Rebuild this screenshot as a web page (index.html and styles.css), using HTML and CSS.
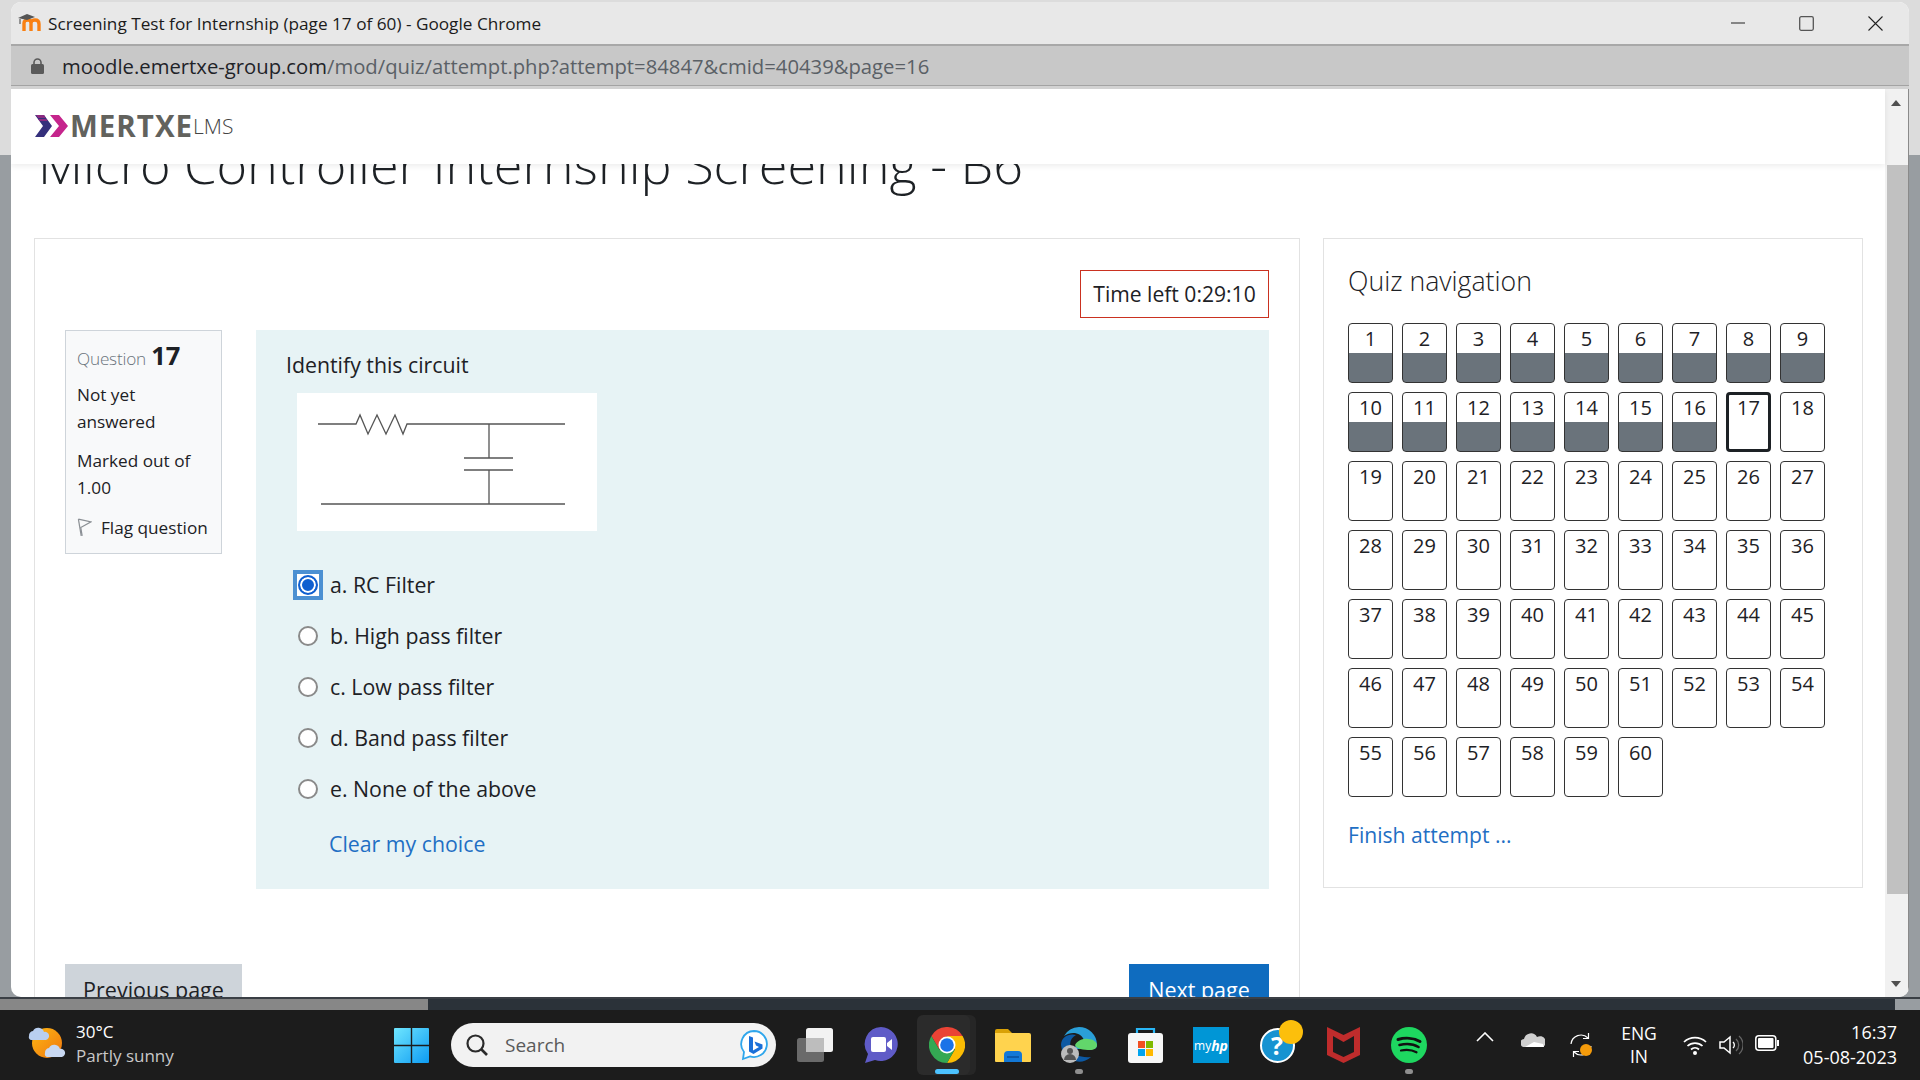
FILE: index.html
```html
<!DOCTYPE html>
<html lang="en">
<head>
  <meta charset="UTF-8" />
  <title>Screening Test for Internship (page 17 of 60) - Google Chrome</title>
  <link rel="stylesheet" href="styles.css">
</head>
<body>

  <div class="desktop">
    <div class="window">

      <div class="titlebar">
        <svg class="favicon" viewBox="0 0 24 18" width="24" height="18">
          <path d="M6 17V9c0-2 2-3 4-3s3 1 3 3v8M13 9c0-2 2-3 4-3s4 1 4 4v7" fill="none" stroke="#f98012" stroke-width="3.4"/>
          <path d="M0 4 9 0l8 3-8 3z" fill="#555"/>
          <path d="M2 5v5" stroke="#777" stroke-width="1.5"/>
        </svg>
        <span class="title-text">Screening Test for Internship (page 17 of 60) - Google Chrome</span>
        <div class="win-controls">
          <span class="win-btn"><svg width="14" height="14" viewBox="0 0 14 14"><path d="M0 7h14" stroke="#222" stroke-width="1.2"/></svg></span>
          <span class="win-btn"><svg width="15" height="15" viewBox="0 0 15 15"><rect x=".7" y=".7" width="13.6" height="13.6" rx="1.5" fill="none" stroke="#555" stroke-width="1.3"/></svg></span>
          <span class="win-btn"><svg width="15" height="15" viewBox="0 0 15 15"><path d="M.5.5l14 14M14.5.5l-14 14" stroke="#222" stroke-width="1.1"/></svg></span>
        </div>
      </div>

      <div class="addressbar">
        <svg class="lock" viewBox="0 0 13 16" width="13" height="16">
          <path d="M3 7V4.500a3.500 3.500 0 0 1 7 0V7" fill="none" stroke="#5a5a5a" stroke-width="1.6"/>
          <rect y="6" width="13" height="10" rx="1.5" fill="#5a5a5a"/>
        </svg>
        <span class="url"><b>moodle.emertxe-group.com</b>/mod/quiz/attempt.php?attempt=84847&amp;cmid=40439&amp;page=16</span>
      </div>

      <div class="viewport">
        <header class="site-header">
          <svg class="logo-mark" viewBox="0 0 33 22" width="33" height="22">
            <path d="M0 0h9l8 11-8 11H0l8-11z" fill="#35307c"/>
            <path d="M1 0h8l2 3H3zM3 4h8.500l1 2H4.500z" fill="#8a2a80"/>
            <path d="M15 0h9l9 11-9 11h-9l9-11z" fill="#c5258c"/>
          </svg>
          <span class="logo-name">MERTXE</span><span class="logo-lms">LMS</span>
        </header>

        <div class="page">
          <h1 class="page-title">Micro Controller Internship Screening - B6</h1>

          <div class="columns">
            <section class="quiz-card">
              <div class="timer-row"><div class="timer">Time left 0:29:10</div></div>

              <div class="question">
                <aside class="q-info">
                  <div class="q-no">Question <strong>17</strong></div>
                  <div class="q-state">Not yet answered</div>
                  <div class="q-grade">Marked out of 1.00</div>
                  <div class="q-flag">
                    <svg viewBox="0 0 16 20" width="15" height="19"><path d="M1.500 1 15 4 4 10l1.500 9" fill="none" stroke="#8a8f94" stroke-width="1.3"/><path d="M1.500 1l3 18" fill="none" stroke="#8a8f94" stroke-width="1.3"/></svg>
                    <span>Flag question</span>
                  </div>
                </aside>

                <div class="q-body">
                  <p class="q-text">Identify this circuit</p>
                  <svg class="circuit" viewBox="0 0 300 138" width="300" height="138">
                    <g fill="none" stroke="#555" stroke-width="1.3">
                      <path d="M21 31H59l4-9 8 19 9-19 9 19 9-19 8 19 4-10H268"/>
                      <path d="M192 31V65M167 65h49M167 77h49M192 77v34M24 111H268"/>
                    </g>
                  </svg>
                  <ul class="answers">
                    <li><span class="radio-wrap selected"><span class="radio checked"></span></span>a. RC Filter</li>
                    <li><span class="radio-wrap"><span class="radio"></span></span>b. High pass filter</li>
                    <li><span class="radio-wrap"><span class="radio"></span></span>c. Low pass filter</li>
                    <li><span class="radio-wrap"><span class="radio"></span></span>d. Band pass filter</li>
                    <li><span class="radio-wrap"><span class="radio"></span></span>e. None of the above</li>
                  </ul>
                  <a class="clear-choice" href="#">Clear my choice</a>
                </div>
              </div>

              <div class="page-buttons">
                <button class="btn-prev">Previous page</button>
                <button class="btn-next">Next page</button>
              </div>
            </section>

            <aside class="nav-card">
              <h2>Quiz navigation</h2>
              <div class="nav-grid">
                <a class="qn done">1</a><a class="qn done">2</a><a class="qn done">3</a><a class="qn done">4</a><a class="qn done">5</a><a class="qn done">6</a><a class="qn done">7</a><a class="qn done">8</a><a class="qn done">9</a>
                <a class="qn done">10</a><a class="qn done">11</a><a class="qn done">12</a><a class="qn done">13</a><a class="qn done">14</a><a class="qn done">15</a><a class="qn done">16</a><a class="qn current">17</a><a class="qn">18</a>
                <a class="qn">19</a><a class="qn">20</a><a class="qn">21</a><a class="qn">22</a><a class="qn">23</a><a class="qn">24</a><a class="qn">25</a><a class="qn">26</a><a class="qn">27</a>
                <a class="qn">28</a><a class="qn">29</a><a class="qn">30</a><a class="qn">31</a><a class="qn">32</a><a class="qn">33</a><a class="qn">34</a><a class="qn">35</a><a class="qn">36</a>
                <a class="qn">37</a><a class="qn">38</a><a class="qn">39</a><a class="qn">40</a><a class="qn">41</a><a class="qn">42</a><a class="qn">43</a><a class="qn">44</a><a class="qn">45</a>
                <a class="qn">46</a><a class="qn">47</a><a class="qn">48</a><a class="qn">49</a><a class="qn">50</a><a class="qn">51</a><a class="qn">52</a><a class="qn">53</a><a class="qn">54</a>
                <a class="qn">55</a><a class="qn">56</a><a class="qn">57</a><a class="qn">58</a><a class="qn">59</a><a class="qn">60</a>
              </div>
              <a class="finish" href="#">Finish attempt ...</a>
            </aside>
          </div>
        </div>

        <div class="scrollbar">
          <span class="arrow-up"></span>
          <span class="thumb"></span>
          <span class="arrow-down"></span>
        </div>
      </div>
    </div>
    <div class="back-strip"></div>
  </div>

  <footer class="taskbar">
    <div class="weather">
      <svg class="weather-icon" viewBox="0 0 38 34" width="38" height="34">
        <defs><linearGradient id="sun" x1="0" y1="0" x2="1" y2="1"><stop offset="0" stop-color="#fdb813"/><stop offset="1" stop-color="#f0760f"/></linearGradient></defs>
        <circle cx="19" cy="15" r="15" fill="url(#sun)"/>
        <path d="M4 11a5 5 0 0 1 4-5 6 6 0 0 1 11 1 4 4 0 0 1 2 8H6a3 3 0 0 1-2-4z" transform="translate(-3 -3)" fill="#b9cff0"/>
        <path d="M17 27a5 5 0 0 1 4-5 6 6 0 0 1 11 1 4 4 0 0 1 2 8H19a3 3 0 0 1-2-4z" transform="translate(0 -2)" fill="#c8d8f2"/>
      </svg>
      <div class="weather-text"><span>30°C</span><span class="dim">Partly sunny</span></div>
    </div>

    <svg class="start" viewBox="0 0 35 35" width="35" height="35">
      <defs><linearGradient id="winblue" x1="0" y1="0" x2="1" y2="1"><stop offset="0" stop-color="#6fe6ff"/><stop offset="1" stop-color="#0d9bf2"/></linearGradient></defs>
      <path d="M0 1a1 1 0 0 1 1-1h15.800v16.800H0zM18.200 0H34a1 1 0 0 1 1 1v15.800H18.200zM0 18.200h16.800V35H1a1 1 0 0 1-1-1zM18.200 18.200H35V34a1 1 0 0 1-1 1H18.200z" fill="url(#winblue)"/>
    </svg>

    <div class="searchbox">
      <svg viewBox="0 0 24 24" width="24" height="24"><circle cx="10.500" cy="10.500" r="8" fill="none" stroke="#2b2b2b" stroke-width="2.2"/><path d="M16.500 16.500 22 22" stroke="#2b2b2b" stroke-width="2.6"/></svg>
      <span>Search</span>
      <svg class="bing" viewBox="0 0 32 32" width="32" height="32">
        <path d="M16 2a13 13 0 1 1-4 25.400L5 30l1-7A13 13 0 0 1 16 2z" fill="#fff" stroke="#2fa6ec" stroke-width="1.8"/>
        <path d="M11 7l4 1.500v13l6-3.500-3-1.500-1.500-4 8 3v4l-9 5.500-4.500-2.500z" fill="#1a6fd8"/>
      </svg>
    </div>

    <div class="apps">
      <span class="app">
        <svg viewBox="0 0 36 34" width="36" height="34"><rect y="10" width="27" height="24" rx="2.5" fill="#6a6a6a"/><rect x="9" width="27" height="24" rx="2.5" fill="#f2f2f2"/><path d="M9 10h18v14H9z" fill="#bdbdbd"/></svg>
      </span>
      <span class="app">
        <svg viewBox="0 0 34 36" width="34" height="36"><path d="M17 0a17 17 0 1 1-6 33L1 36l3-9A17 17 0 0 1 17 0z" fill="#5f5bc7"/><rect x="7" y="10" width="15" height="15" rx="2" fill="#fff"/><path d="M23 16l5-4v11l-5-4z" fill="#fff"/></svg>
      </span>
      <span class="app app-active">
        <svg viewBox="0 0 36 36" width="36" height="36">
          <path d="M2.400 9A18 18 0 0 1 33.600 9H18l-7.800 13.500z" fill="#ea4335"/>
          <path d="M33.600 9A18 18 0 0 1 18 36l7.800-13.500L18 9z" fill="#fbbc04"/>
          <path d="M18 36A18 18 0 0 1 2.400 9l7.800 13.500h15.600z" fill="#34a853"/>
          <circle cx="18" cy="18" r="8.500" fill="#fff"/><circle cx="18" cy="18" r="6.800" fill="#1a73e8"/>
        </svg>
        <i class="pill pill-blue"></i>
      </span>
      <span class="app">
        <svg viewBox="0 0 36 33" width="36" height="33"><path d="M0 2a2 2 0 0 1 2-2h11l4 4H0z" fill="#d9a106"/><path d="M0 4h34a2 2 0 0 1 2 2v26a1 1 0 0 1-1 1H1a1 1 0 0 1-1-1z" fill="#ffd34e"/><path d="M9 33v-7a4 4 0 0 1 4-4h10a4 4 0 0 1 4 4v7z" fill="#1378d6"/><path d="M12 28h12" stroke="#0a4f9a" stroke-width="1.5"/></svg>
      </span>
      <span class="app">
        <svg viewBox="0 0 36 36" width="36" height="36">
          <path d="M18 0a18 18 0 0 1 18 18c0 2-1 4-4 4H14c0-5 4-8 9-9C20 5 10 4 3 9a18 18 0 0 1 15-9z" fill="#2a9fd8"/>
          <path d="M36 18c0 3-3 5-7 5-6 0-14-1-15-5 2-4 8-7 13-6 5 0 9 3 9 6z" fill="#62d66b"/>
          <path d="M0 18C0 10 8 6 15 8c-5 3-7 7-5 13 2 7 10 10 20 9a18 18 0 0 1-30-12z" fill="#0c59a4"/>
          <circle cx="9" cy="27" r="9" fill="#bcbcbc"/><circle cx="9" cy="24" r="3" fill="#555"/><path d="M3 33a6 6 0 0 1 12 0z" fill="#555"/>
        </svg>
        <i class="pill"></i>
      </span>
      <span class="app">
        <svg viewBox="0 0 35 36" width="35" height="36">
          <path d="M9 8V2h17v6" fill="none" stroke="#29b6f6" stroke-width="2.2"/>
          <rect y="6" width="35" height="30" rx="3" fill="#f7f7f7"/>
          <rect x="10" y="14" width="7" height="7" fill="#f25022"/><rect x="18" y="14" width="7" height="7" fill="#7fba00"/><rect x="10" y="22" width="7" height="7" fill="#00a4ef"/><rect x="18" y="22" width="7" height="7" fill="#ffb900"/>
        </svg>
      </span>
      <span class="app"><span class="myhp">my<em>hp</em></span></span>
      <span class="app">
        <span class="help">?</span>
        <i class="badge"></i>
      </span>
      <span class="app">
        <svg viewBox="0 0 33 36" width="33" height="36"><path d="M0 0l16.500 8L33 0v28l-16.500 8L0 28zM6 9v16l10.500 5L27 25V9l-10.500 6z" fill="#bf2c2c" fill-rule="evenodd"/></svg>
      </span>
      <span class="app">
        <svg viewBox="0 0 36 36" width="36" height="36"><circle cx="18" cy="18" r="18" fill="#1ed760"/><g fill="none" stroke="#111" stroke-linecap="round"><path d="M7 12.500c7-2 16-1.500 22 2" stroke-width="3"/><path d="M8.500 18c6-1.500 14-1 19 2" stroke-width="2.6"/><path d="M10 23.500c5-1 11-.7 15.500 1.800" stroke-width="2.2"/></g></svg>
        <i class="pill"></i>
      </span>
    </div>

    <div class="tray">
      <span class="tray-item"><svg viewBox="0 0 18 10" width="18" height="10"><path d="M1 9l8-8 8 8" fill="none" stroke="#fff" stroke-width="1.6"/></svg></span>
      <span class="tray-item"><svg viewBox="0 0 24 15" width="24" height="15"><path d="M4 15a4 4 0 0 1-1-8 7 7 0 0 1 13-2 5 5 0 0 1 6 10z" fill="#cfcfcf"/><path d="M4 15l9-5 9 2 1 3z" fill="#fff"/></svg></span>
      <span class="tray-item"><svg viewBox="0 0 26 26" width="26" height="26"><path d="M3 12a10 10 0 0 1 17-6M23 14a10 10 0 0 1-17 6" fill="none" stroke="#fff" stroke-width="1.2"/><path d="M20.500 1v5.500H15M5.500 25v-5.500H11" fill="none" stroke="#fff" stroke-width="1.2"/><circle cx="18" cy="18" r="6" fill="#f59b0b"/></svg></span>
    </div>

    <div class="lang"><span>ENG</span><span>IN</span></div>

    <div class="status">
      <span class="status-item"><svg viewBox="0 0 24 20" width="24" height="20"><g fill="none" stroke="#fff" stroke-width="1.7"><path d="M1 7a16 16 0 0 1 22 0"/><path d="M4.500 11a11 11 0 0 1 15 0"/><path d="M8 14.500a6 6 0 0 1 8 0"/></g><circle cx="12" cy="18" r="2" fill="#fff"/></svg></span>
      <span class="status-item"><svg viewBox="0 0 24 20" width="24" height="20"><path d="M1 7h4l6-5v16l-6-5H1z" fill="none" stroke="#fff" stroke-width="1.5"/><path d="M14 7a4 4 0 0 1 0 6" fill="none" stroke="#fff" stroke-width="1.3"/><path d="M17 4a8 8 0 0 1 0 12M20 1a12 12 0 0 1 0 18" fill="none" stroke="#666" stroke-width="1.3"/></svg></span>
      <span class="status-item"><svg viewBox="0 0 24 16" width="24" height="16"><rect x=".8" y=".8" width="20" height="14.400" rx="3" fill="none" stroke="#fff" stroke-width="1.5"/><rect x="3" y="3" width="15.500" height="10" rx="1" fill="#fff"/><rect x="22" y="5" width="2" height="6" fill="#fff"/></svg></span>
    </div>

    <div class="clock"><span>16:37</span><span>05-08-2023</span></div>
  </footer>

</body>
</html>
```

FILE: styles.css
```css
* {
  box-sizing: border-box;
}

body {
  margin: 0;
  width: 1920px;
  height: 1080px;
  overflow: hidden;
  font-family: "Open Sans", sans-serif;
  color: #1d2125;
  background: #1c1c1c;
}

.desktop {
  height: 1010px;
  padding-top: 2px;
  background: linear-gradient(#dcdcdc 0, #dcdcdc 155px, #989da1 155px);
}

.window {
  margin: 0 11px;
  height: 995px;
  display: flex;
  flex-direction: column;
  background: #fff;
  border-radius: 10px;
  overflow: hidden;
}

.back-strip {
  height: 13px;
  background: linear-gradient(90deg, #878787 0, #878787 428px, #2b3239 428px, #2b3239 1895px, #989da1 1895px);
  border-top: 2px solid #3a3f45;
}

/* chrome title + address */

.titlebar {
  height: 44px;
  flex-shrink: 0;
  display: flex;
  align-items: center;
  padding-left: 7px;
  background: #e8e8e8;
  border-bottom: 2px solid #a8a8a8;
}

.favicon {
  margin-right: 6px;
}

.title-text {
  font-size: 17.2px;
  color: #1b1b1b;
}

.win-controls {
  margin-left: auto;
  margin-right: -1px;
  display: flex;
}

.win-btn {
  width: 69px;
  display: flex;
  justify-content: center;
  align-items: center;
}

.addressbar {
  height: 43px;
  flex-shrink: 0;
  display: flex;
  align-items: center;
  padding: 0 0 4px 20px;
  background: linear-gradient(#c8c8c8 39px, #a3a3a3 39px, #a3a3a3 40px, #d2d2d2 40px);
}

.url {
  margin-left: 18px;
  font-size: 20.25px;
  color: #5a6066;
}

.url b {
  font-weight: 400;
  color: #1f2328;
}

/* page */

.viewport {
  flex: 1;
  min-height: 0;
  position: relative;
  overflow: hidden;
  display: flex;
}

.site-header {
  position: absolute;
  top: 0;
  left: 0;
  right: 24px;
  height: 75px;
  z-index: 2;
  display: flex;
  align-items: center;
  padding: 0 0 2px 24px;
  background: #fff;
  box-shadow: 0 2px 6px rgba(0, 0, 0, 0.08);
}

.logo-mark {
  margin-right: 2px;
}

.logo-name {
  font-size: 29.5px;
  font-weight: 700;
  letter-spacing: 1px;
  color: #62625d;
  line-height: 1;
}

.logo-lms {
  font-size: 21px;
  font-weight: 300;
  color: #444;
  line-height: 1;
  margin-top: 1px;
}

.page {
  flex: 1;
  min-width: 0;
  padding-left: 23px;
}

.page-title {
  margin: 37px 0 19px 4px;
  height: 93px;
  font-size: 52.2px;
  font-weight: 300;
  line-height: 75px;
  white-space: nowrap;
  color: #1d2125;
}

.columns {
  display: flex;
  gap: 23px;
  align-items: flex-start;
}

.quiz-card {
  width: 1266px;
  flex-shrink: 0;
  padding: 31px 30px 60px;
  border: 1px solid #e2e2e2;
}

.timer-row {
  display: flex;
  justify-content: flex-end;
}

.timer {
  height: 48px;
  width: 189px;
  padding-bottom: 2px;
  display: flex;
  align-items: center;
  justify-content: center;
  font-size: 21.1px;
  border: 1px solid #ca3120;
}

.question {
  display: flex;
  align-items: flex-start;
  gap: 34px;
  margin-top: 12px;
}

.q-info {
  width: 157px;
  height: 224px;
  flex-shrink: 0;
  padding: 11px 11px;
  font-size: 17.2px;
  line-height: 27px;
  background: #f8f9fa;
  border: 1px solid #ced4da;
}

.q-no {
  color: #6a737b;
  font-weight: 300;
  letter-spacing: -0.2px;
}

.q-no strong {
  margin-left: 1px;
  font-size: 25.5px;
  font-weight: 700;
  color: #1d2125;
}

.q-state {
  margin-top: 9px;
}

.q-grade {
  margin-top: 12px;
}

.q-flag {
  display: flex;
  align-items: center;
  gap: 9px;
  margin-top: 13px;
  white-space: nowrap;
}

.q-body {
  flex: 1;
  height: 559px;
  padding: 20px 30px;
  background: #e7f3f5;
}

.q-text {
  margin: 0 0 13px;
  font-size: 21.3px;
  line-height: 30px;
}

.circuit {
  display: block;
  margin-left: 11px;
  background: #fff;
}

.answers {
  list-style: none;
  margin: 29px 0 0;
  padding: 0;
}

.answers li {
  height: 51px;
  display: flex;
  align-items: center;
  gap: 7px;
  margin-left: 7px;
  padding-bottom: 2px;
  font-size: 21.3px;
}

.radio-wrap {
  width: 30px;
  height: 30px;
  display: flex;
  align-items: center;
  justify-content: center;
}

.radio-wrap.selected {
  background: #fff;
  border: 4px solid #4c90d2;
}

.radio {
  width: 20px;
  height: 20px;
  flex-shrink: 0;
  border-radius: 50%;
  background: #fff;
  border: 2px solid #8a8a8a;
}

.radio.checked {
  border-color: #0f5fd0;
  box-shadow: inset 0 0 0 2px #fff;
  background: #0f5fd0;
}

.clear-choice {
  display: block;
  margin: 14px 0 0 43px;
  font-size: 21.3px;
  line-height: 30px;
  color: #1f6fc4;
  text-decoration: none;
}

.page-buttons {
  display: flex;
  justify-content: space-between;
  margin-top: 75px;
}

.page-buttons button {
  height: 50px;
  border: 0;
  font-family: inherit;
  font-size: 21.5px;
}

.btn-prev {
  width: 177px;
  background: #ced4da;
  color: #1d2125;
}

.btn-next {
  width: 140px;
  background: #0f6cbf;
  color: #fff;
}

/* quiz nav */

.nav-card {
  width: 540px;
  height: 650px;
  flex-shrink: 0;
  padding: 0 24px;
  border: 1px solid #e2e2e2;
}

.nav-card h2 {
  margin: 23px 0 23px;
  font-size: 26.7px;
  font-weight: 300;
  line-height: 38px;
  color: #1d2125;
}

.nav-grid {
  display: grid;
  grid-template-columns: repeat(9, 45px);
  grid-auto-rows: 60px;
  gap: 9px;
}

.qn {
  text-align: center;
  font-size: 20px;
  line-height: 30px;
  border: 1px solid #333;
  border-radius: 4px;
  overflow: hidden;
}

.qn.done {
  background: linear-gradient(#fff 29px, #6a737b 29px);
}

.qn.current {
  border: 3px solid #1d2125;
  line-height: 26px;
}

.finish {
  display: block;
  margin-top: 23px;
  font-size: 21.1px;
  line-height: 30px;
  color: #1f6fc4;
  text-decoration: none;
}

/* scrollbar */

.scrollbar {
  width: 24px;
  flex-shrink: 0;
  position: relative;
  background: #f1f1f1;
  border-right: 1px solid #8a8a8a;
}

.scrollbar .thumb {
  position: absolute;
  left: 2px;
  right: 0;
  top: 76px;
  height: 729px;
  background: #c1c1c1;
}

.arrow-up,
.arrow-down {
  position: absolute;
  left: 6px;
  width: 0;
  height: 0;
  border-left: 5px solid transparent;
  border-right: 5px solid transparent;
}

.arrow-up {
  top: 11px;
  border-bottom: 6px solid #505050;
}

.arrow-down {
  bottom: 10px;
  border-top: 6px solid #505050;
}

/* taskbar */

.taskbar {
  height: 70px;
  display: flex;
  align-items: center;
  padding-left: 28px;
  color: #fff;
  background: #1c1c1c;
}

.weather {
  width: 366px;
  flex-shrink: 0;
  display: flex;
  align-items: center;
  gap: 10px;
}

.weather-icon {
  overflow: visible;
}

.weather-text {
  display: flex;
  flex-direction: column;
  padding-bottom: 2px;
  font-size: 17px;
  line-height: 24px;
}

.dim {
  color: #c8c8c8;
}

.start {
  flex-shrink: 0;
}

.searchbox {
  width: 325px;
  height: 44px;
  flex-shrink: 0;
  margin-left: 22px;
  padding: 0 6px 0 14px;
  display: flex;
  align-items: center;
  gap: 16px;
  background: #f2f2f2;
  border-radius: 22px;
  color: #5a5a5a;
  font-size: 19px;
}

.searchbox .bing {
  margin-left: auto;
}

.apps {
  display: flex;
  margin-left: 6px;
}

.app {
  width: 66px;
  height: 60px;
  position: relative;
  display: flex;
  align-items: center;
  justify-content: center;
}

.app-active::before {
  content: "";
  position: absolute;
  left: 3px;
  top: 0;
  width: 53px;
  height: 60px;
  background: #2b2b2b;
  border-radius: 6px;
  box-shadow: 6px 0 0 #262626;
}

.app-active svg {
  position: relative;
}

.pill {
  position: absolute;
  left: 29px;
  bottom: 1px;
  width: 8px;
  height: 5px;
  border-radius: 3px;
  background: #8f8f8f;
}

.pill-blue {
  left: 21px;
  width: 24px;
  background: #4cc2ff;
}

.myhp {
  width: 36px;
  height: 36px;
  display: flex;
  align-items: center;
  justify-content: center;
  background: #0096d6;
  font-size: 12px;
  color: #fff;
}

.myhp em {
  font-weight: 700;
  font-size: 14px;
}

.help {
  width: 35px;
  height: 35px;
  display: flex;
  align-items: center;
  justify-content: center;
  border-radius: 50%;
  background: #1793d1;
  border: 2px solid #fff;
  font-size: 25px;
  font-weight: 700;
  color: #fff;
}

.badge {
  position: absolute;
  left: 35px;
  top: 5px;
  width: 24px;
  height: 24px;
  border-radius: 50%;
  background: #fcbf0c;
}

.tray {
  display: flex;
  margin-left: 19px;
}

.tray-item {
  width: 48px;
  display: flex;
  justify-content: center;
}

.lang {
  width: 50px;
  margin-left: 9px;
  display: flex;
  flex-direction: column;
  align-items: center;
  font-size: 17.5px;
  line-height: 23px;
}

.status {
  display: flex;
  margin-left: 13px;
}

.status-item {
  width: 36px;
  display: flex;
  justify-content: center;
}

.clock {
  flex: 1;
  padding: 0 23px 1px 0;
  display: flex;
  flex-direction: column;
  align-items: flex-end;
  font-size: 18px;
  line-height: 25px;
}
```
